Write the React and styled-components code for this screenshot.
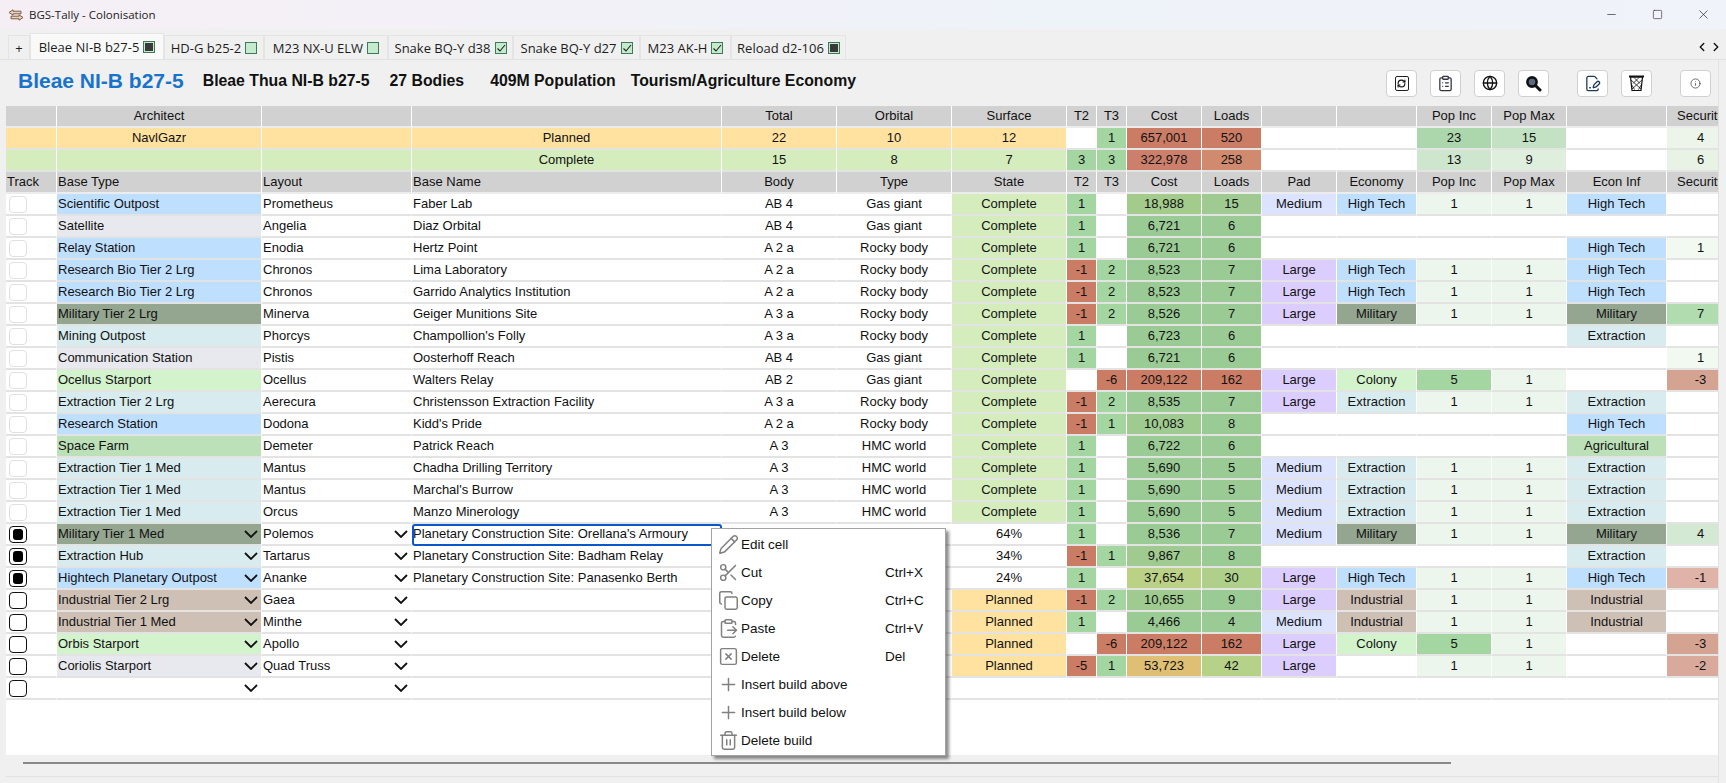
import React from "react";
import styled, { createGlobalStyle } from "styled-components";
import {
  ChevronLeft,
  ChevronRight,
  ClipboardList,
  ClipboardPaste,
  Copy,
  FilePenLine,
  Globe,
  Info,
  Minus,
  Pencil,
  Plus,
  RefreshCw,
  Scissors,
  Square,
  SquareX,
  Trash2,
  X,
} from "lucide-react";

const GlobalStyle = createGlobalStyle`
  html, body {
    margin: 0;
    padding: 0;
    background: #f0f0f0;
    overflow: hidden;
  }
`;

const COLS = [51, 205, 150, 310, 115, 115, 115, 30, 30, 75, 60, 75, 80, 75, 75, 100, 68];

const GREEN = "#a4d6a2";
const RED = "#cb7c64";
const COMPLETE = "#d5edbd";
const PLANNED = "#ffe2a0";

const TYPE_BG = {
  blue: "#bfdfff",
  grey: "#e8e9ee",
  military: "#94a590",
  extraction: "#d8ebee",
  colony: "#d3f3cd",
  farm: "#bce0b8",
  industrial: "#cfc0b6",
};

const baseTypeBg = {
  "Scientific Outpost": TYPE_BG.blue,
  Satellite: TYPE_BG.grey,
  "Relay Station": TYPE_BG.blue,
  "Research Bio Tier 2 Lrg": TYPE_BG.blue,
  "Military Tier 2 Lrg": TYPE_BG.military,
  "Mining Outpost": TYPE_BG.extraction,
  "Communication Station": TYPE_BG.grey,
  "Ocellus Starport": TYPE_BG.colony,
  "Extraction Tier 2 Lrg": TYPE_BG.extraction,
  "Research Station": TYPE_BG.blue,
  "Space Farm": TYPE_BG.farm,
  "Extraction Tier 1 Med": TYPE_BG.extraction,
  "Military Tier 1 Med": TYPE_BG.military,
  "Extraction Hub": TYPE_BG.extraction,
  "Hightech Planetary Outpost": TYPE_BG.blue,
  "Industrial Tier 2 Lrg": TYPE_BG.industrial,
  "Industrial Tier 1 Med": TYPE_BG.industrial,
  "Orbis Starport": TYPE_BG.colony,
  "Coriolis Starport": TYPE_BG.grey,
};

const economyBg = {
  "High Tech": TYPE_BG.blue,
  Military: TYPE_BG.military,
  Extraction: TYPE_BG.extraction,
  Colony: TYPE_BG.colony,
  Agricultural: TYPE_BG.farm,
  Industrial: TYPE_BG.industrial,
};

const padBg = { Medium: "#dbe3ff", Large: "#dccdff" };
const popBg = { 1: "#edf6ec", 5: GREEN };
const securityBg = {
  1: "#f2f9f0",
  4: "#d3e9d3",
  7: "#b0dcb0",
  "-1": "#dfb3a8",
  "-2": "#d9a99c",
  "-3": "#d5a391",
};

const costBg = {
  "18,988": "#a3cb8b",
  "10,083": "#9fcb90",
  "9,867": "#9fcb90",
  "10,655": "#9fcb90",
  "37,654": "#bad186",
  "53,723": "#debf73",
  "209,122": RED,
};
const loadsBg = { 15: "#9fcb92", 30: "#aed08a", 42: "#b6d188", 162: RED };
const COST_LOW = "#9bcb95";

const tierBg = (v) => (v === "" ? undefined : Number(v) < 0 ? RED : GREEN);

const stateBg = { Complete: COMPLETE, Planned: PLANNED };

const PCS = "Planetary Construction Site: ";
const C = "Complete";
const R = "Rocky body";
const G = "Gas giant";
const H = "HMC world";

// type, layout, name, body, bodyType, state, t2, t3, cost, loads, pad, economy, popInc, popMax, econInf, security
const builds = [
  ["Scientific Outpost", "Prometheus", "Faber Lab", "AB 4", G, C, "1", "", "18,988", "15", "Medium", "High Tech", "1", "1", "High Tech", ""],
  ["Satellite", "Angelia", "Diaz Orbital", "AB 4", G, C, "1", "", "6,721", "6", "", "", "", "", "", ""],
  ["Relay Station", "Enodia", "Hertz Point", "A 2 a", R, C, "1", "", "6,721", "6", "", "", "", "", "High Tech", "1"],
  ["Research Bio Tier 2 Lrg", "Chronos", "Lima Laboratory", "A 2 a", R, C, "-1", "2", "8,523", "7", "Large", "High Tech", "1", "1", "High Tech", ""],
  ["Research Bio Tier 2 Lrg", "Chronos", "Garrido Analytics Institution", "A 2 a", R, C, "-1", "2", "8,523", "7", "Large", "High Tech", "1", "1", "High Tech", ""],
  ["Military Tier 2 Lrg", "Minerva", "Geiger Munitions Site", "A 3 a", R, C, "-1", "2", "8,526", "7", "Large", "Military", "1", "1", "Military", "7"],
  ["Mining Outpost", "Phorcys", "Champollion's Folly", "A 3 a", R, C, "1", "", "6,723", "6", "", "", "", "", "Extraction", ""],
  ["Communication Station", "Pistis", "Oosterhoff Reach", "AB 4", G, C, "1", "", "6,721", "6", "", "", "", "", "", "1"],
  ["Ocellus Starport", "Ocellus", "Walters Relay", "AB 2", G, C, "", "-6", "209,122", "162", "Large", "Colony", "5", "1", "", "-3"],
  ["Extraction Tier 2 Lrg", "Aerecura", "Christensson Extraction Facility", "A 3 a", R, C, "-1", "2", "8,535", "7", "Large", "Extraction", "1", "1", "Extraction", ""],
  ["Research Station", "Dodona", "Kidd's Pride", "A 2 a", R, C, "-1", "1", "10,083", "8", "", "", "", "", "High Tech", ""],
  ["Space Farm", "Demeter", "Patrick Reach", "A 3", H, C, "1", "", "6,722", "6", "", "", "", "", "Agricultural", ""],
  ["Extraction Tier 1 Med", "Mantus", "Chadha Drilling Territory", "A 3", H, C, "1", "", "5,690", "5", "Medium", "Extraction", "1", "1", "Extraction", ""],
  ["Extraction Tier 1 Med", "Mantus", "Marchal's Burrow", "A 3", H, C, "1", "", "5,690", "5", "Medium", "Extraction", "1", "1", "Extraction", ""],
  ["Extraction Tier 1 Med", "Orcus", "Manzo Minerology", "A 3", H, C, "1", "", "5,690", "5", "Medium", "Extraction", "1", "1", "Extraction", ""],
  ["Military Tier 1 Med", "Polemos", PCS + "Orellana's Armoury", "", "", "64%", "1", "", "8,536", "7", "Medium", "Military", "1", "1", "Military", "4"],
  ["Extraction Hub", "Tartarus", PCS + "Badham Relay", "", "", "34%", "-1", "1", "9,867", "8", "", "", "", "", "Extraction", ""],
  ["Hightech Planetary Outpost", "Ananke", PCS + "Panasenko Berth", "", "", "24%", "1", "", "37,654", "30", "Large", "High Tech", "1", "1", "High Tech", "-1"],
  ["Industrial Tier 2 Lrg", "Gaea", "", "", "", "Planned", "-1", "2", "10,655", "9", "Large", "Industrial", "1", "1", "Industrial", ""],
  ["Industrial Tier 1 Med", "Minthe", "", "", "", "Planned", "1", "", "4,466", "4", "Medium", "Industrial", "1", "1", "Industrial", ""],
  ["Orbis Starport", "Apollo", "", "", "", "Planned", "", "-6", "209,122", "162", "Large", "Colony", "5", "1", "", "-3"],
  ["Coriolis Starport", "Quad Truss", "", "", "", "Planned", "-5", "1", "53,723", "42", "Large", "", "1", "1", "", "-2"],
  ["", "", "", "", "", "", "", "", "", "", "", "", "", "", "", ""],
];

const tabs = [
  { label: "Bleae NI-B b27-5", mark: "progress", active: true },
  { label: "HD-G b25-2", mark: "empty", width: 100 },
  { label: "M23 NX-U ELW", mark: "empty", width: 124 },
  { label: "Snake BQ-Y d38", mark: "done", width: 125 },
  { label: "Snake BQ-Y d27", mark: "done", width: 127 },
  { label: "M23 AK-H", mark: "done", width: 91 },
  { label: "Reload d2-106", mark: "progress", width: 115 },
];

const menuItems = [
  { icon: Pencil, label: "Edit cell" },
  { icon: Scissors, label: "Cut", keys: "Ctrl+X" },
  { icon: Copy, label: "Copy", keys: "Ctrl+C" },
  { icon: ClipboardPaste, label: "Paste", keys: "Ctrl+V" },
  { icon: SquareX, label: "Delete", keys: "Del" },
  { icon: Plus, label: "Insert build above" },
  { icon: Plus, label: "Insert build below" },
  { icon: Trash2, label: "Delete build" },
];

function AppIcon() {
  return (
    <svg width="16" height="12" viewBox="0 0 16 12" fill="#e8d2bc" stroke="#7d5c46" strokeWidth="1">
      <path d="M5 .8L1 3.5l4 2.7V4.8h8V2.2H5z" />
      <path d="M11 5.8l4 2.7-4 2.7V9.8H3V7.2h8z" />
    </svg>
  );
}

function BasketIcon() {
  return (
    <svg width="17" height="18" viewBox="0 0 17 18" fill="none" stroke="#111" strokeWidth="1.2">
      <path d="M1 2.5h15" strokeWidth="2" />
      <path d="M2.5 3l1.5 13.5h9L14.5 3z" />
      <path d="M3 6l10 9M14 6L4 15M6 3.5l6 6M11 3.5l-6 6M3.5 10.5l3 5M13.5 10.5l-3 5" strokeWidth="0.8" />
    </svg>
  );
}

function MagnifierIcon() {
  return (
    <svg width="17" height="17" viewBox="0 0 17 17" fill="none" stroke="#111">
      <circle cx="7" cy="7" r="4.6" strokeWidth="2.6" fill="#5a6a80" />
      <path d="M10.5 10.5L15 15" strokeWidth="3" strokeLinecap="round" />
    </svg>
  );
}

function ChevronMark() {
  return (
    <ChevronSvg width="14" height="8" viewBox="0 0 14 8" fill="none" stroke="#111" strokeWidth="1.8">
      <path d="M1 1l6 6 6-6" />
    </ChevronSvg>
  );
}

const Page = styled.div`
  position: relative;
  width: 1726px;
  height: 783px;
  display: flex;
  flex-direction: column;
  overflow: hidden;
  background: #f0f0f0;
  font-family: "Liberation Sans", Arial, sans-serif;
  color: #111;
`;

const TitleBar = styled.div`
  flex: 0 0 29px;
  display: flex;
  align-items: center;
  padding-left: 8px;
  background: linear-gradient(90deg, #f5eff5 0%, #f3f1f8 30%, #eef2f9 60%, #f0f3f9 100%);
`;

const AppTitle = styled.span`
  margin-left: 5px;
  font: 11.5px "Open Sans", "Noto Sans", sans-serif;
  color: #222;
`;

const WindowButtons = styled.div`
  margin-left: auto;
  display: flex;
  align-items: center;
  color: #222;
`;

const WindowButton = styled.span`
  width: 46px;
  display: flex;
  justify-content: center;
`;

const TabStrip = styled.div`
  flex: 0 0 31px;
  display: flex;
  align-items: flex-end;
  padding-left: 8px;
  border-bottom: 1px solid #e2e2e2;
  box-sizing: border-box;
`;

const Tab = styled.div`
  box-sizing: border-box;
  height: ${(p) => (p.$active ? "26px" : "24px")};
  width: ${(p) => p.$width}px;
  display: flex;
  align-items: center;
  justify-content: center;
  gap: 4px;
  background: ${(p) => (p.$active ? "#f9f9f9" : "#f0f0f0")};
  border: 1px solid #e4e4e4;
  border-bottom: none;
  font: 13px "Open Sans", "Noto Sans", sans-serif;
  white-space: nowrap;
  color: #1c1c1c;
`;

const TabMark = styled.span`
  box-sizing: border-box;
  flex: 0 0 12px;
  height: 12px;
  display: flex;
  align-items: center;
  justify-content: center;
  background: #c4ebcc;
  border: 1px solid #3f7a58;

  &::after {
    content: "";
    display: ${(p) => (p.$mark === "progress" ? "block" : "none")};
    width: 8px;
    height: 8px;
    background: #3a3a3a;
  }
`;

const TabScroll = styled.div`
  margin-left: auto;
  padding-right: 3px;
  height: 24px;
  display: flex;
  align-items: center;
  color: #111;
`;

const Panel = styled.div`
  flex: 1;
  min-height: 0;
  display: flex;
  flex-direction: column;
  margin: 0 7px 0 6px;
  border-right: 1px solid #e2e2e2;
`;

const SystemHeader = styled.div`
  flex: 0 0 46px;
  display: flex;
  align-items: center;
  padding-left: 12px;
`;

const SystemName = styled.h1`
  margin: 0 19px 5px 0;
  font: bold 21px "Liberation Sans", Arial, sans-serif;
  color: #1873cc;
`;

const SystemFact = styled.span`
  margin: 0 ${(p) => p.$gap}px 4px 0;
  font: bold 15.8px "Liberation Sans", Arial, sans-serif;
  white-space: nowrap;
`;

const Toolbar = styled.div`
  margin-left: auto;
  margin-right: 7px;
  display: flex;
  gap: 28px;
`;

const ToolGroup = styled.div`
  display: flex;
  gap: 13px;
`;

const ToolButton = styled.button`
  box-sizing: border-box;
  width: 31px;
  height: 27px;
  padding: 0;
  display: flex;
  align-items: center;
  justify-content: center;
  background: #fff;
  border: 1px solid #d0d0d0;
  border-radius: 4px;
  color: #111;
`;

const ReloadFrame = styled.span`
  box-sizing: border-box;
  width: 14px;
  height: 15px;
  display: flex;
  align-items: center;
  justify-content: center;
  border: 1.5px solid #222;
  border-radius: 2px;
`;

const Sheet = styled.div`
  flex: 0 0 649px;
  overflow: hidden;
  background: #fff;
`;

const Grid = styled.table`
  table-layout: fixed;
  width: ${COLS.reduce((a, b) => a + b, 0)}px;
  border-collapse: separate;
  border-spacing: 0;
  font: 13px "Liberation Sans", Arial, sans-serif;
`;

const Cell = styled.td`
  position: relative;
  box-sizing: border-box;
  height: 22px;
  padding: 0 ${(p) => (p.$align === "left" ? "1px" : "0")};
  text-align: ${(p) => p.$align || "center"};
  background: ${(p) => p.$bg || "#fff"};
  border-right: 1px solid #fff;
  border-bottom: 2px solid ${(p) => (p.$head ? "#ececec" : "#e3e3e3")};
  overflow: hidden;
  white-space: nowrap;
  line-height: 20px;
`;

const SelectedCell = styled(Cell)`
  outline: 2px solid #0b57c9;
  outline-offset: -2px;
  border-radius: 3px;
`;

const DropCell = styled.div`
  display: flex;
  align-items: center;
  height: 20px;
`;

const ChevronSvg = styled.svg`
  flex: 0 0 auto;
  margin-left: auto;
  margin-right: 2px;
`;

const TrackBox = styled.span`
  box-sizing: border-box;
  display: flex;
  align-items: center;
  justify-content: center;
  width: 18px;
  height: 17px;
  margin-left: 2px;
  border-radius: 4px;
  background: #fff;
  border: ${(p) => (p.$live ? "1.5px solid #111" : "1px solid #e0e0e0")};

  &::after {
    content: "";
    display: ${(p) => (p.$checked ? "block" : "none")};
    width: 10px;
    height: 11px;
    border-radius: 3px;
    background: #000;
  }
`;

const FooterBar = styled.div`
  flex: 1;
  display: flex;
  flex-direction: column;
  padding-top: 7px;
`;

const ScrollThumb = styled.div`
  width: 1428px;
  height: 2px;
  margin-left: 17px;
  background: #888;
`;

const FrameEdge = styled.div`
  margin-top: 12px;
  border-top: 1px solid #e2e2e2;
`;

const Menu = styled.div`
  position: absolute;
  left: 711px;
  top: 528px;
  box-sizing: border-box;
  width: 235px;
  height: 228px;
  padding: 1px 0 0 4px;
  background: #fff;
  border: 1px solid #a3a3a3;
  box-shadow: 3px 3px 3px rgba(0, 0, 0, 0.45);
  font: 13.5px "Liberation Sans", Arial, sans-serif;
`;

const MenuRow = styled.div`
  height: 28px;
  display: flex;
  align-items: center;
  color: #111;
`;

const MenuIcon = styled.span`
  flex: 0 0 25px;
  display: flex;
  justify-content: center;
  color: #808080;
`;

const MenuLabel = styled.span`
  flex: 0 0 144px;
`;

function SummaryCells({ head, bg, values }) {
  return values.map((v, i) => (
    <Cell key={i} $head={head} $bg={v.bg || bg}>
      {v.text ?? v}
    </Cell>
  ));
}

function App() {
  return (
    <Page>
      <GlobalStyle />
      <TitleBar>
        <AppIcon />
        <AppTitle>BGS-Tally - Colonisation</AppTitle>
        <WindowButtons>
          <WindowButton><Minus size={13} strokeWidth={1.2} /></WindowButton>
          <WindowButton><Square size={11} strokeWidth={1.3} /></WindowButton>
          <WindowButton><X size={15} strokeWidth={1.1} /></WindowButton>
        </WindowButtons>
      </TitleBar>

      <TabStrip>
        <Tab $width={22}>+</Tab>
        {tabs.map((t) => (
          <Tab key={t.label} $active={t.active} $width={t.width || 134}>
            {t.label}
            <TabMark $mark={t.mark}>
              {t.mark === "done" && <svg width="10" height="10" viewBox="0 0 10 10" fill="none" stroke="#222" strokeWidth="1.1"><path d="M1.5 5.5l2.5 2.5 5-6" /></svg>}
            </TabMark>
          </Tab>
        ))}
        <TabScroll>
          <ChevronLeft size={14} strokeWidth={2.4} />
          <ChevronRight size={14} strokeWidth={2.4} />
        </TabScroll>
      </TabStrip>

      <Panel>
        <SystemHeader>
          <SystemName>Bleae NI-B b27-5</SystemName>
          <SystemFact $gap={20}>Bleae Thua NI-B b27-5</SystemFact>
          <SystemFact $gap={26}>27 Bodies</SystemFact>
          <SystemFact $gap={15}>409M Population</SystemFact>
          <SystemFact $gap={0}>Tourism/Agriculture Economy</SystemFact>
          <Toolbar>
            <ToolGroup>
              <ToolButton><ReloadFrame><RefreshCw size={9} strokeWidth={3} /></ReloadFrame></ToolButton>
              <ToolButton><ClipboardList size={17} strokeWidth={1.8} color="#334" /></ToolButton>
              <ToolButton><Globe size={16} strokeWidth={2} /></ToolButton>
              <ToolButton><MagnifierIcon /></ToolButton>
            </ToolGroup>
            <ToolGroup>
              <ToolButton><FilePenLine size={17} strokeWidth={1.8} color="#1a3a5a" /></ToolButton>
              <ToolButton><BasketIcon /></ToolButton>
            </ToolGroup>
            <ToolGroup>
              <ToolButton><Info size={11} strokeWidth={1.5} color="#333" /></ToolButton>
            </ToolGroup>
          </Toolbar>
        </SystemHeader>

        <Sheet>
          <Grid>
            <colgroup>
              {COLS.map((w, i) => <col key={i} width={w} />)}
            </colgroup>
            <tbody>
              <tr>
                <SummaryCells head bg="#d1d1d1" values={["", "Architect", "", "", "Total", "Orbital", "Surface", "T2", "T3", "Cost", "Loads", "", "", "Pop Inc", "Pop Max", "", "Security"]} />
              </tr>
              <tr>
                <SummaryCells
                  bg={PLANNED}
                  values={[
                    "", "NavlGazr", "", "Planned", "22", "10", "12",
                    { text: "", bg: "#fff" }, { text: "1", bg: GREEN },
                    { text: "657,001", bg: RED }, { text: "520", bg: RED },
                    { text: "", bg: "#fff" }, { text: "", bg: "#fff" },
                    { text: "23", bg: "#acd6ac" }, { text: "15", bg: "#c3e2c3" },
                    { text: "", bg: "#fff" }, { text: "4", bg: "#edf5ea" },
                  ]}
                />
              </tr>
              <tr>
                <SummaryCells
                  bg={COMPLETE}
                  values={[
                    "", "", "", "Complete", "15", "8", "7",
                    { text: "3", bg: GREEN }, { text: "3", bg: GREEN },
                    { text: "322,978", bg: "#cc806c" }, { text: "258", bg: "#d08a6e" },
                    { text: "", bg: "#fff" }, { text: "", bg: "#fff" },
                    { text: "13", bg: "#cde6cd" }, { text: "9", bg: "#deefde" },
                    { text: "", bg: "#fff" }, { text: "6", bg: "#e8f3e6" },
                  ]}
                />
              </tr>
              <tr>
                {["Track", "Base Type", "Layout", "Base Name"].map((h) => (
                  <Cell key={h} $head $bg="#d1d1d1" $align="left">{h}</Cell>
                ))}
                <SummaryCells head bg="#d1d1d1" values={["Body", "Type", "State", "T2", "T3", "Cost", "Loads", "Pad", "Economy", "Pop Inc", "Pop Max", "Econ Inf", "Security"]} />
              </tr>
              {builds.map((b, i) => {
                const [type, layout, name, body, bodyType, state, t2, t3, cost, loads, pad, economy, popInc, popMax, econInf, security] = b;
                const live = i >= 15;
                const Name = i === 15 ? SelectedCell : Cell;
                return (
                  <tr key={i}>
                    <Cell $align="left">
                      <TrackBox $live={live} $checked={i >= 15 && i <= 17} />
                    </Cell>
                    <Cell $align="left" $bg={baseTypeBg[type]}>
                      {live ? <DropCell>{type}<ChevronMark /></DropCell> : type}
                    </Cell>
                    <Cell $align="left">
                      {live ? <DropCell>{layout}<ChevronMark /></DropCell> : layout}
                    </Cell>
                    <Name $align="left">{name}</Name>
                    <Cell>{body}</Cell>
                    <Cell>{bodyType}</Cell>
                    <Cell $bg={stateBg[state]}>{state}</Cell>
                    <Cell $bg={tierBg(t2)}>{t2}</Cell>
                    <Cell $bg={tierBg(t3)}>{t3}</Cell>
                    <Cell $bg={cost ? costBg[cost] || COST_LOW : undefined}>{cost}</Cell>
                    <Cell $bg={loads ? loadsBg[loads] || COST_LOW : undefined}>{loads}</Cell>
                    <Cell $bg={padBg[pad]}>{pad}</Cell>
                    <Cell $bg={economyBg[economy]}>{economy}</Cell>
                    <Cell $bg={popBg[popInc]}>{popInc}</Cell>
                    <Cell $bg={popBg[popMax]}>{popMax}</Cell>
                    <Cell $bg={economyBg[econInf]}>{econInf}</Cell>
                    <Cell $bg={securityBg[security]}>{security}</Cell>
                  </tr>
                );
              })}
            </tbody>
          </Grid>
        </Sheet>

        <FooterBar>
          <ScrollThumb />
          <FrameEdge />
        </FooterBar>
      </Panel>

      <Menu>
        {menuItems.map(({ icon: Icon, label, keys }) => (
          <MenuRow key={label}>
            <MenuIcon><Icon size={21} strokeWidth={1.7} /></MenuIcon>
            <MenuLabel>{label}</MenuLabel>
            {keys}
          </MenuRow>
        ))}
      </Menu>
    </Page>
  );
}

export default App;
